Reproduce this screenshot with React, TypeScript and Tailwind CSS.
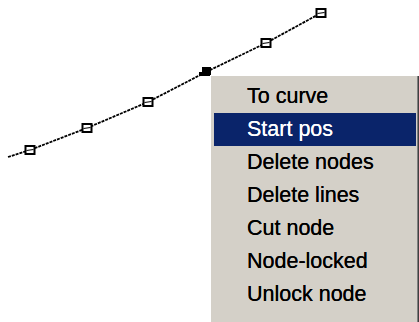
const nodes: [number, number][] = [
  [30, 150],
  [87, 128],
  [148, 102],
  [266, 43],
  [321, 13],
]

const items = ['To curve', 'Start pos', 'Delete nodes', 'Delete lines', 'Cut node', 'Node-locked', 'Unlock node']

function Polyline() {
  return (
    <svg className="absolute left-0 top-0" width={419} height={322} viewBox="0 0 419 322">
      <polyline
        points="8,157 30,150 87,128 148,102 206,72 266,43 321,13"
        fill="none"
        stroke="#000"
        strokeWidth={1.8}
        strokeDasharray="3 1"
      />
      {nodes.map(([x, y], i) => (
        <g key={i}>
          <rect x={x - 4.5} y={y - 4} width={9} height={8} fill="#fff" stroke="#000" strokeWidth={2} />
          <line x1={x - 3.5} y1={y + 0.5} x2={x + 3.5} y2={y - 0.5} stroke="#000" strokeWidth={1.2} />
        </g>
      ))}
      {/* selected node */}
      <rect x={202} y={67} width={9} height={9} fill="#000" />
      <rect x={199} y={72} width={5} height={4} fill="#000" />
    </svg>
  )
}

export default function App() {
  return (
    <div className="relative w-[419px] h-[322px] bg-white overflow-hidden" style={{ fontFamily: '"Liberation Sans", Arial, sans-serif' }}>
      <Polyline />

      {/* context menu */}
      <div className="absolute left-[210px] top-[75px] w-[209px] h-[260px] bg-[#d4d0c8] border-t border-l border-white shadow-[inset_-1px_0_0_#404040,inset_-2px_0_0_#808080]">
        <div className="flex flex-col pt-[4px] pl-[3px] pr-[3px]">
          {items.map((label) => (
            <div
              key={label}
              className={`h-[33px] flex items-center pl-[33px] text-[21.5px] leading-none [text-shadow:0_0_0.4px_currentColor] ${
                label === 'Start pos' ? 'bg-[#0a246a] text-white' : 'text-black'
              }`}
            >
              {label}
            </div>
          ))}
        </div>
      </div>
    </div>
  )
}
